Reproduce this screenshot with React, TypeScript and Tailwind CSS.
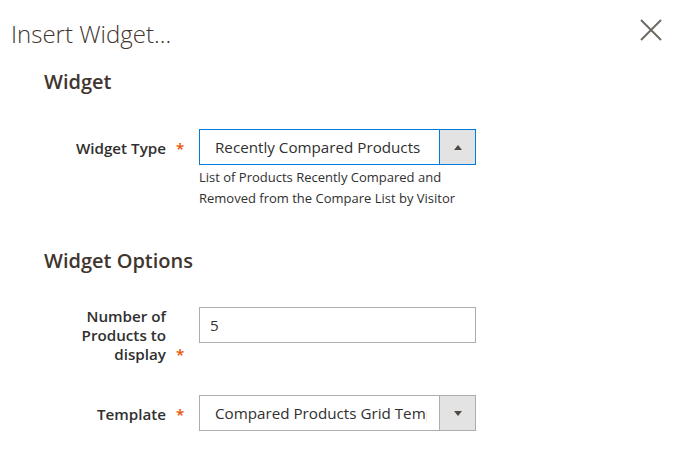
import React from "react";

// Magento-style "Insert Widget..." modal slide

const LABEL = "w-[122px] mr-[33px] shrink-0 text-right text-[15.2px] leading-[19px] font-semibold text-[#303030]";

function Required({ children }: { children: React.ReactNode }) {
  return (
    <span className="relative">
      {children}
      <span className="absolute ml-[10px] text-[#eb5202]">*</span>
    </span>
  );
}

function Caret({ up }: { up?: boolean }) {
  return up ? (
    <span className="h-0 w-0 border-x-[4px] border-b-[5px] border-x-transparent border-b-[#514943]" />
  ) : (
    <span className="h-0 w-0 border-x-[4px] border-t-[5px] border-x-transparent border-t-[#514943]" />
  );
}

function Select({ value, focused }: { value: string; focused?: boolean }) {
  const border = focused ? "border-[#007bdb]" : "border-[#adadad]";
  return (
    <div className={`flex h-[36px] w-[277px] border bg-white ${border}`}>
      <div className="min-w-0 flex-1 pl-[15px] pr-[12px] pt-[7.5px]">
        <div className="overflow-hidden whitespace-nowrap text-[15.2px] leading-[19px] text-[#303030]">{value}</div>
      </div>
      <div className={`flex w-[36px] items-center justify-center border-l bg-[#e3e3e3] ${border}`}>
        <Caret up={focused} />
      </div>
    </div>
  );
}

export default function App() {
  return (
    <div className="h-[457px] w-[685px] overflow-hidden bg-white font-['Open_Sans',sans-serif]">
      <header className="flex items-start justify-between pl-[11px] pr-[23px] pt-[18px]">
        <h1 className="text-[24px] font-light leading-[32px] text-[#41362f]">Insert Widget...</h1>
        <button className="mt-[1px]" aria-label="Close">
          <svg width="22" height="22" viewBox="0 0 22 22" fill="none" stroke="#6e6863" strokeWidth="2">
            <line x1="1" y1="1" x2="21" y2="21" />
            <line x1="21" y1="1" x2="1" y2="21" />
          </svg>
        </button>
      </header>

      <section className="pl-[44px]">
        <h2 className="mt-[20px] text-[20px] font-semibold leading-[24px] text-[#41362f]">Widget</h2>

        <div className="mt-[35px] flex">
          <div className={`${LABEL} pt-[10px]`}>
            <Required>Widget Type</Required>
          </div>
          <div>
            <Select value="Recently Compared Products" focused />
            <p className="mt-[2px] w-[277px] text-[13px] leading-[20.6px] text-[#303030]">
              List of Products Recently Compared and Removed from the Compare List by Visitor
            </p>
          </div>
        </div>

        <h2 className="mt-[41px] text-[20px] font-semibold leading-[24px] text-[#41362f]">Widget Options</h2>

        <div className="mt-[34px] flex">
          <div className={LABEL}>
            <Required>Number of Products to display</Required>
          </div>
          <div className="h-[36px] w-[277px] border border-[#adadad] bg-white pl-[10px] pt-[7.5px] text-[15.2px] leading-[19px] text-[#303030]">
            5
          </div>
        </div>

        <div className="mt-[31px] flex">
          <div className={`${LABEL} pt-[10px]`}>
            <Required>Template</Required>
          </div>
          <Select value="Compared Products Grid Template" />
        </div>
      </section>
    </div>
  );
}
